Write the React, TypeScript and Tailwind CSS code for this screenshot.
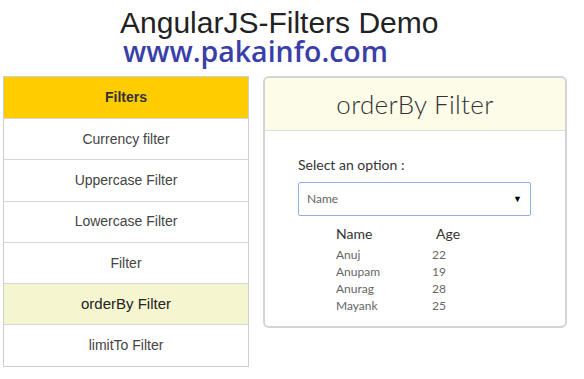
const filters = [
  "Currency filter",
  "Uppercase Filter",
  "Lowercase Filter",
  "Filter",
  "orderBy Filter",
  "limitTo Filter",
];

const people = [
  { name: "Anuj", age: 22 },
  { name: "Anupam", age: 19 },
  { name: "Anurag", age: 28 },
  { name: "Mayank", age: 25 },
];

const App = () => {
  return (
    <div className="w-[584px] h-[379px] bg-white overflow-hidden">
      {/* Page heading */}
      <div className="pt-[8px] pl-[120px] h-[37px]">
        <h1 className="text-[30px] leading-[29px] text-[#222] font-['Liberation_Sans',Arial,sans-serif]">
          AngularJS-Filters Demo
        </h1>
      </div>
      <div className="pl-[123px] h-[39px]">
        <span className="block text-[28.5px] leading-[28px] font-semibold text-[#3a3fa8] font-['Open_Sans',sans-serif]">
          www.pakainfo.com
        </span>
      </div>

      <div className="flex items-start pl-[3px] gap-[14px]">
        {/* Left filter list */}
        <div className="w-[246px] border border-[#cfcfcf] font-['Liberation_Sans',Arial,sans-serif]">
          <div className="h-[41px] bg-[#ffcc00] flex items-center justify-center text-[14px] font-bold text-[#333]">
            Filters
          </div>
          {filters.map((f) => (
            <div
              key={f}
              className={`h-[41.3px] flex items-center justify-center border-t border-[#d6d6d6] ${
                f === "orderBy Filter" ? "bg-[#f5f5cf] text-[#222] text-[15px]" : "bg-white text-[#444] text-[14px]"
              }`}
            >
              {f}
            </div>
          ))}
        </div>

        {/* Right panel */}
        <div className="w-[304px] h-[252px] border-2 border-[#d4d4d4] rounded-[6px] overflow-hidden font-['Lato',sans-serif]">
          <div className="h-[53px] bg-[#fcfce9] border-b border-[#dcdcdc] flex items-center justify-center">
            <span className="text-[26px] font-light text-[#333] tracking-[0.3px]">orderBy Filter</span>
          </div>
          <div className="pl-[33px] pt-[25px]">
            <div className="text-[14px] text-[#333] leading-[18px]">Select an option :</div>
            <div className="mt-[8px] w-[233px] h-[34px] border border-[#8fb3e0] rounded-[2px] flex items-center justify-between pl-[8px] pr-[8px]">
              <span className="text-[12px] text-[#666]">Name</span>
              <span className="text-[9px] text-black">▼</span>
            </div>
            <div className="pl-[38px] pt-[9px]">
              <div className="flex text-[14px] text-[#333] leading-[18px] mb-[3px]">
                <span className="w-[100px]">Name</span>
                <span>Age</span>
              </div>
              {people.map((p) => (
                <div key={p.name} className="flex text-[12px] text-[#666] leading-[17px]">
                  <span className="w-[96px]">{p.name}</span>
                  <span>{p.age}</span>
                </div>
              ))}
            </div>
          </div>
        </div>
      </div>
    </div>
  );
};

export default App;
